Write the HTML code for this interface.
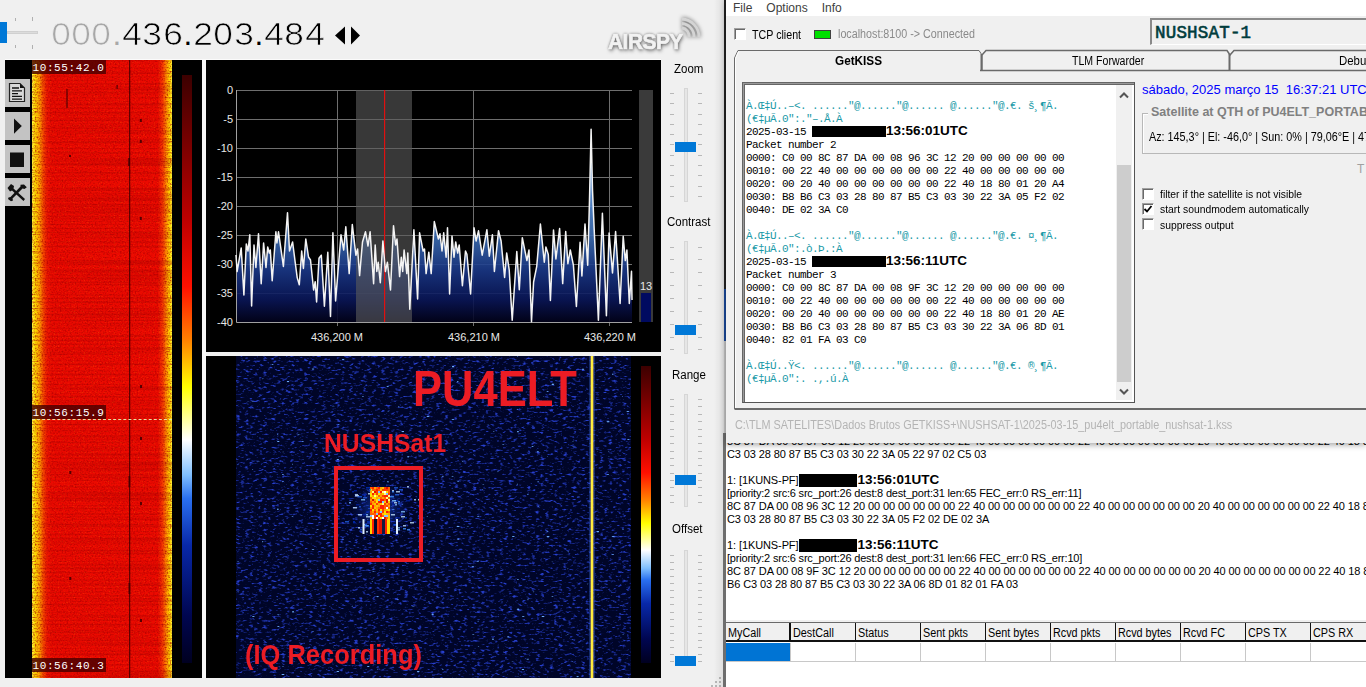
<!DOCTYPE html>
<html><head><meta charset="utf-8">
<style>
*{margin:0;padding:0;box-sizing:border-box}
html,body{width:1366px;height:687px;overflow:hidden;background:#f0f0f0;font-family:"Liberation Sans",sans-serif}
.a{position:absolute}
.mono{font-family:"Liberation Mono",monospace}
#term>div,#kiss>div{height:13px}
</style></head><body>
<!-- LEFT APP -->
<div class="a" style="left:0;top:0;width:724px;height:687px;background:#f0f0f0"></div>
<!-- top slider -->
<div class="a" style="left:7px;top:31px;width:31px;height:3px;background:#dcdcdc;border:1px solid #d0d0d0"></div>
<div class="a" style="left:0;top:22px;width:7px;height:21px;background:#0078d7"></div>
<div class="a" style="left:15px;top:18px;width:1px;height:3px;background:#b0b0b0"></div>
<div class="a" style="left:32px;top:17px;width:1px;height:4px;background:#b0b0b0"></div>
<div class="a" style="left:15px;top:45px;width:1px;height:3px;background:#b0b0b0"></div>
<div class="a" style="left:32px;top:45px;width:1px;height:4px;background:#b0b0b0"></div>
<!-- frequency -->
<div class="a" id="freq" style="left:50.85px;top:14px;font-size:31.5px;line-height:40px;white-space:nowrap;color:#000;-webkit-text-stroke:0.7px #f0f0f0"><span style="display:inline-block;width:20.3px;text-align:center;color:#a8a8a8;transform:scaleX(1.12)">0</span><span style="display:inline-block;width:20.3px;text-align:center;color:#a8a8a8;transform:scaleX(1.12)">0</span><span style="display:inline-block;width:20.3px;text-align:center;color:#a8a8a8;transform:scaleX(1.12)">0</span><span style="display:inline-block;width:10.2px;text-align:center;color:#a8a8a8;-webkit-text-stroke:0">.</span><span style="display:inline-block;width:20.3px;text-align:center;color:#000;transform:scaleX(1.12)">4</span><span style="display:inline-block;width:20.3px;text-align:center;color:#000;transform:scaleX(1.12)">3</span><span style="display:inline-block;width:20.3px;text-align:center;color:#000;transform:scaleX(1.12)">6</span><span style="display:inline-block;width:10.2px;text-align:center;color:#000;-webkit-text-stroke:0">.</span><span style="display:inline-block;width:20.3px;text-align:center;color:#000;transform:scaleX(1.12)">2</span><span style="display:inline-block;width:20.3px;text-align:center;color:#000;transform:scaleX(1.12)">0</span><span style="display:inline-block;width:20.3px;text-align:center;color:#000;transform:scaleX(1.12)">3</span><span style="display:inline-block;width:10.2px;text-align:center;color:#000;-webkit-text-stroke:0">.</span><span style="display:inline-block;width:20.3px;text-align:center;color:#000;transform:scaleX(1.12)">4</span><span style="display:inline-block;width:20.3px;text-align:center;color:#000;transform:scaleX(1.12)">8</span><span style="display:inline-block;width:20.3px;text-align:center;color:#000;transform:scaleX(1.12)">4</span></div>
<svg class="a" style="left:334px;top:26px" width="28" height="20"><path d="M1,9.5 L11,0.5 L11,18.5 Z" fill="#000"/><path d="M17,0.5 L26,9.5 L17,18.5 Z" fill="#000"/></svg>
<!-- AIRSPY logo -->
<div class="a" style="left:608px;top:30px;font-family:'Liberation Sans',sans-serif;font-weight:bold;font-size:21.5px;line-height:24px;color:#f2f2f2;letter-spacing:-0.5px;-webkit-text-stroke:0.7px #f2f2f2;text-shadow:0 0 3px rgba(0,0,0,0.6),1px 2px 4px rgba(0,0,0,0.5);transform-origin:0 0;transform:scaleX(0.97)">AIRSPY</div>
<svg class="a" style="left:672px;top:12px" width="36" height="34"><g fill="none" stroke="#d4d4d4" stroke-width="2.8" style="filter:drop-shadow(0 0 2px rgba(0,0,0,0.6))"><path d="M10,16 A8,8 0 0 1 17,25"/><path d="M10,11.5 A13,13 0 0 1 22,25"/><path d="M10,7 A18,18 0 0 1 27,25"/></g></svg>
<!-- left black panel -->
<div class="a" style="left:5px;top:60px;width:197px;height:618px;background:#000"></div>
<div class="a" style="left:5px;top:59px;width:656px;height:1px;background:#fbfbfb"></div>
<div class="a" style="left:202px;top:60px;width:4px;height:618px;background:#f7f7f7"></div>
<!-- buttons -->
<div class="a" style="left:5px;top:79px;width:25px;height:28px;background:#c3c3c3"></div>
<div class="a" style="left:5px;top:112px;width:25px;height:28px;background:#c3c3c3"></div>
<div class="a" style="left:5px;top:145px;width:25px;height:28px;background:#c3c3c3"></div>
<div class="a" style="left:5px;top:178px;width:25px;height:28px;background:#c3c3c3"></div>
<svg class="a" style="left:0;top:0" width="32" height="210">
 <path d="M9.5,83.5 H20 L24.5,88 V101.5 H9.5 Z" fill="#d8d8d8" stroke="#222" stroke-width="1.2"/>
 <path d="M20,83.5 L24.5,88 H20 Z" fill="#111"/>
 <g stroke="#111" stroke-width="1.3"><path d="M12,88 H19 M12,90.8 H22 M12,93.6 H18 M12,96.4 H22 M12,99.2 H22"/></g>
 <path d="M14,118.5 L21.8,126 L14,133.8 Z" fill="#111"/>
 <rect x="10" y="152.5" width="14" height="14.5" fill="#111"/>
 <path d="M7.5,188 L11,184 L14,186 L13.5,188.5 L25,199 L23.5,201 L12,190.5 L10,191.5 Z" fill="#111"/>
 <path d="M24,184.5 L26.8,187.2 L24.5,189 L22.5,188.5 L12.5,198.5 L13,200.5 L11,201.2 L8,199 L8.5,197.5 L10.5,197 L20.5,186.5 L20.5,184.7 Z" fill="#111"/>
</svg>
<!-- waterfall red -->
<div class="a" id="wf1" style="left:32px;top:60px;width:140px;height:618px;overflow:hidden;background:linear-gradient(90deg,#ffff40 0px,#ffe400 3px,#ffb000 7px,#f85000 11px,#f01800 15px,#ec0a00 20px,#ec0a00 126px,#f84000 131px,#ffa000 135px,#ffe000 138px,#ffff40 140px)">
 <svg width="140" height="618" style="position:absolute;left:0;top:0">
  <filter id="n1" x="0" y="0" width="100%" height="100%"><feTurbulence type="fractalNoise" baseFrequency="0.6 0.7" numOctaves="1" seed="3"/><feColorMatrix type="matrix" values="0 0 0 0 0.4  0 0 0 0 0  0 0 0 0 0  0 0 0 -3 1.6"/></filter>
  <filter id="n1b" x="0" y="0" width="100%" height="100%"><feTurbulence type="fractalNoise" baseFrequency="0.8 0.8" numOctaves="1" seed="9"/><feColorMatrix type="matrix" values="0 0 0 0 1  0 0 0 0 0.35  0 0 0 0 0  0 0 0 3 -1.75"/></filter>
  <filter id="n2" x="0" y="0" width="100%" height="100%"><feTurbulence type="fractalNoise" baseFrequency="0.003 0.5" numOctaves="1" seed="7"/><feColorMatrix type="matrix" values="0 0 0 0 0.3  0 0 0 0 0  0 0 0 0 0  0 0 0 -4 2.3"/></filter>
  <rect width="140" height="618" filter="url(#n1)" opacity="0.7"/>
  <rect width="140" height="618" filter="url(#n1b)" opacity="0.35"/>
  <rect width="140" height="618" filter="url(#n2)" opacity="0.25"/>
  <rect x="97.2" y="0" width="1" height="618" fill="#300000" opacity="0.9"/><rect x="34.4" y="29.0" width="1.2" height="19" fill="#400000" opacity="0.85"/><rect x="84.5" y="25.0" width="1.2" height="4" fill="#400000" opacity="0.85"/><rect x="107.8" y="59.0" width="2" height="3" fill="#400000" opacity="0.85"/><rect x="107.8" y="80.0" width="2" height="3" fill="#400000" opacity="0.85"/><rect x="37.0" y="95.0" width="2" height="2" fill="#400000" opacity="0.85"/><rect x="96.2" y="98.0" width="1.8" height="8" fill="#400000" opacity="0.85"/><rect x="107.8" y="157.0" width="2" height="3" fill="#400000" opacity="0.85"/><rect x="108.0" y="325.0" width="2" height="3" fill="#400000" opacity="0.85"/><rect x="108.0" y="377.0" width="2" height="3" fill="#400000" opacity="0.85"/><rect x="37.3" y="411.0" width="2" height="3" fill="#400000" opacity="0.85"/><rect x="96.5" y="416.0" width="1.8" height="11" fill="#400000" opacity="0.85"/><rect x="108.0" y="442.0" width="2" height="3" fill="#400000" opacity="0.85"/><rect x="37.3" y="517.0" width="2" height="3" fill="#400000" opacity="0.85"/><rect x="96.5" y="523.0" width="1.8" height="11" fill="#400000" opacity="0.85"/><rect x="108.0" y="559.0" width="2" height="3" fill="#400000" opacity="0.85"/>
 </svg>
</div>
<div class="a mono" style="left:32px;top:60px;width:74px;height:14px;background:rgba(70,0,0,0.8);color:#fff;font-size:11px;line-height:16px;letter-spacing:0.6px;padding-left:0.5px">10:55:42.0</div>
<div class="a" style="left:32px;top:419px;width:140px;height:1px;border-top:1px dashed #e8e0a0"></div>
<div class="a mono" style="left:32px;top:405px;width:74px;height:14px;background:rgba(70,0,0,0.8);color:#fff;font-size:11px;line-height:16px;letter-spacing:0.6px;padding-left:0.5px">10:56:15.9</div>
<div class="a mono" style="left:32px;top:658px;width:74px;height:14px;background:rgba(70,0,0,0.8);color:#fff;font-size:11px;line-height:16px;letter-spacing:0.6px;padding-left:0.5px">10:56:40.3</div>
<!-- colorbar 1 -->
<div class="a" style="left:182px;top:75px;width:10px;height:588px;background:linear-gradient(180deg,#3c0000 0%,#7a0000 12%,#c00000 25%,#ff1000 36%,#ff8000 45%,#ffff00 53%,#ffffff 62%,#80c0ff 68%,#2a70f0 72%,#0828a8 80%,#000650 92%,#000020 100%)"></div>

<!-- spectrum panel -->
<div class="a" style="left:206px;top:60px;width:455px;height:292px;background:#000"></div>
<svg class="a" style="left:0;top:0" width="700" height="360">
 <defs><linearGradient id="sg" gradientUnits="userSpaceOnUse" x1="0" y1="130" x2="0" y2="322"><stop offset="0" stop-color="#7ab8f0"/><stop offset="0.36" stop-color="#5a90d8"/><stop offset="0.57" stop-color="#3a6ab0"/><stop offset="0.73" stop-color="#1a3888"/><stop offset="0.885" stop-color="#0a1658"/><stop offset="1" stop-color="#02021a"/></linearGradient></defs>
 
 
 <g stroke="#6e6e6e" stroke-width="1">
  <path d="M236.5,90.5 H632 M236.5,119.5 H632 M236.5,148.5 H632 M236.5,177.5 H632 M236.5,206.5 H632 M236.5,235.5 H632 M236.5,264.5 H632 M236.5,293.5 H632"/>
  <path d="M337.5,90 V326 M473.5,90 V326 M609.5,90 V326"/>
 </g>
 <path d="M236,255 L237.1,271.5 L241.2,248.0 L243.9,295.0 L246.3,244.0 L248.0,251.0 L249.8,234.8 L251.6,306.0 L254.0,245.0 L255.9,267.4 L258.5,233.8 L261.2,283.7 L263.6,243.0 L266.0,267.4 L267.7,247.0 L269.3,253.0 L270.3,250.0 L272.2,280.7 L275.9,231.8 L276.9,243.0 L278.5,231.8 L283.4,266.4 L287.5,212.8 L289.5,251.0 L292.6,242.0 L295.2,262.3 L297.2,277.6 L299.3,284.8 L301.7,251.0 L303.4,268.5 L305.8,239.0 L308.5,257.0 L310.5,260.0 L313.6,290.0 L315.2,281.7 L316.6,302.0 L319.0,258.3 L321.3,255.2 L324.4,306.2 L327.8,252.2 L330.5,316.4 L332.9,232.8 L335.6,301.0 L338.0,271.5 L341.0,234.8 L343.7,250.0 L345.8,226.7 L349.2,273.6 L352.3,224.6 L355.9,255.2 L357.6,249.0 L359.6,275.6 L362.5,242.0 L365.5,231.8 L368.0,246.0 L370.1,231.8 L373.6,283.7 L375.2,245.0 L376.8,271.5 L378.2,262.3 L380.3,282.7 L382.9,241.0 L385.4,271.5 L387.4,262.3 L390.5,290.0 L393.5,225.7 L395.6,245.0 L397.0,239.0 L399.6,276.6 L401.3,257.2 L402.7,271.5 L404.1,250.0 L406.8,273.6 L407.8,253.0 L409.8,309.2 L413.9,229.7 L417.6,299.0 L419.6,232.8 L423.1,251.0 L424.5,249.0 L426.1,273.6 L428.8,252.2 L431.2,273.6 L434.3,221.6 L438.4,239.0 L440.0,233.8 L442.0,251.0 L443.7,232.8 L446.1,257.2 L447.5,227.7 L449.6,294.0 L452.0,236.0 L454.0,257.2 L455.7,242.0 L457.7,253.0 L459.2,245.0 L462.4,285.8 L465.5,251.0 L466.9,254.2 L470.6,294.0 L474.0,227.7 L476.1,241.0 L478.5,230.8 L482.2,255.2 L486.9,229.7 L489.3,256.2 L492.4,234.8 L494.4,271.5 L498.5,230.8 L501.1,241.0 L504.6,277.4 L506.7,253.0 L509.2,269.8 L512.2,320.2 L516.8,251.5 L519.3,289.7 L522.3,237.7 L526.9,260.6 L529.0,250.0 L531.5,321.8 L533.6,282.0 L536.7,266.7 L540.4,224.0 L544.3,262.2 L545.9,246.9 L548.3,254.5 L550.4,300.4 L553.5,230.0 L555.9,259.0 L559.6,228.5 L562.7,283.6 L565.7,231.6 L567.9,263.7 L570.3,250.0 L573.4,265.2 L576.4,306.5 L580.1,242.3 L581.9,275.9 L585.0,224.0 L587.7,265.2 L589.5,200.0 L591.1,129.2 L592.5,190.0 L594.2,230.0 L598.4,320.2 L602.4,213.2 L606.4,315.7 L609.1,233.1 L612.5,272.9 L615.6,231.6 L620.1,303.4 L623.2,236.2 L625.3,260.6 L626.9,250.0 L629.3,303.4 L631.5,271.3 L632,300 L632,322 L236,322 Z" fill="url(#sg)" fill-opacity="0.9"/>
 <rect x="356" y="90" width="56" height="232" fill="#5a5a5a" opacity="0.62"/>
 <path d="M236.5,90 V322.5 H632" fill="none" stroke="#a0a0a0" stroke-width="1"/>
 <rect x="384" y="90" width="1.2" height="232" fill="#e01010"/>
 <path d="M236,255 L237.1,271.5 L241.2,248.0 L243.9,295.0 L246.3,244.0 L248.0,251.0 L249.8,234.8 L251.6,306.0 L254.0,245.0 L255.9,267.4 L258.5,233.8 L261.2,283.7 L263.6,243.0 L266.0,267.4 L267.7,247.0 L269.3,253.0 L270.3,250.0 L272.2,280.7 L275.9,231.8 L276.9,243.0 L278.5,231.8 L283.4,266.4 L287.5,212.8 L289.5,251.0 L292.6,242.0 L295.2,262.3 L297.2,277.6 L299.3,284.8 L301.7,251.0 L303.4,268.5 L305.8,239.0 L308.5,257.0 L310.5,260.0 L313.6,290.0 L315.2,281.7 L316.6,302.0 L319.0,258.3 L321.3,255.2 L324.4,306.2 L327.8,252.2 L330.5,316.4 L332.9,232.8 L335.6,301.0 L338.0,271.5 L341.0,234.8 L343.7,250.0 L345.8,226.7 L349.2,273.6 L352.3,224.6 L355.9,255.2 L357.6,249.0 L359.6,275.6 L362.5,242.0 L365.5,231.8 L368.0,246.0 L370.1,231.8 L373.6,283.7 L375.2,245.0 L376.8,271.5 L378.2,262.3 L380.3,282.7 L382.9,241.0 L385.4,271.5 L387.4,262.3 L390.5,290.0 L393.5,225.7 L395.6,245.0 L397.0,239.0 L399.6,276.6 L401.3,257.2 L402.7,271.5 L404.1,250.0 L406.8,273.6 L407.8,253.0 L409.8,309.2 L413.9,229.7 L417.6,299.0 L419.6,232.8 L423.1,251.0 L424.5,249.0 L426.1,273.6 L428.8,252.2 L431.2,273.6 L434.3,221.6 L438.4,239.0 L440.0,233.8 L442.0,251.0 L443.7,232.8 L446.1,257.2 L447.5,227.7 L449.6,294.0 L452.0,236.0 L454.0,257.2 L455.7,242.0 L457.7,253.0 L459.2,245.0 L462.4,285.8 L465.5,251.0 L466.9,254.2 L470.6,294.0 L474.0,227.7 L476.1,241.0 L478.5,230.8 L482.2,255.2 L486.9,229.7 L489.3,256.2 L492.4,234.8 L494.4,271.5 L498.5,230.8 L501.1,241.0 L504.6,277.4 L506.7,253.0 L509.2,269.8 L512.2,320.2 L516.8,251.5 L519.3,289.7 L522.3,237.7 L526.9,260.6 L529.0,250.0 L531.5,321.8 L533.6,282.0 L536.7,266.7 L540.4,224.0 L544.3,262.2 L545.9,246.9 L548.3,254.5 L550.4,300.4 L553.5,230.0 L555.9,259.0 L559.6,228.5 L562.7,283.6 L565.7,231.6 L567.9,263.7 L570.3,250.0 L573.4,265.2 L576.4,306.5 L580.1,242.3 L581.9,275.9 L585.0,224.0 L587.7,265.2 L589.5,200.0 L591.1,129.2 L592.5,190.0 L594.2,230.0 L598.4,320.2 L602.4,213.2 L606.4,315.7 L609.1,233.1 L612.5,272.9 L615.6,231.6 L620.1,303.4 L623.2,236.2 L625.3,260.6 L626.9,250.0 L629.3,303.4 L631.5,271.3 L632,300" fill="none" stroke="#f4f4f4" stroke-width="1.5" stroke-linejoin="round"/>
 <g font-family="Liberation Sans" font-size="11" fill="#e8e8e8" text-anchor="end">
  <text x="233" y="94">0</text><text x="233" y="123">-5</text><text x="233" y="152">-10</text><text x="233" y="181">-15</text><text x="233" y="210">-20</text><text x="233" y="239">-25</text><text x="233" y="268">-30</text><text x="233" y="297">-35</text><text x="233" y="326">-40</text>
 </g>
 <g font-family="Liberation Sans" font-size="11" fill="#e8e8e8" text-anchor="middle">
  <text x="337" y="341">436,200 M</text><text x="474" y="341">436,210 M</text><text x="610" y="341">436,220 M</text>
 </g>
 <rect x="639" y="90" width="14" height="232" fill="#3a3a3a"/>
 <rect x="641" y="293" width="10" height="29" fill="#000a60"/>
 <text x="640" y="290" font-family="Liberation Sans" font-size="11" fill="#e8e8e8">13</text>
</svg>

<!-- lower waterfall -->
<div class="a" style="left:206px;top:356px;width:455px;height:322px;background:#000"></div>
<div class="a" id="wf2" style="left:236px;top:356px;width:395px;height:322px;overflow:hidden;background:#000528">
 <svg width="395" height="322" style="position:absolute;left:0;top:0">
  <filter id="n3" x="0" y="0" width="100%" height="100%"><feTurbulence type="fractalNoise" baseFrequency="0.22 0.45" numOctaves="2" seed="11"/><feColorMatrix type="matrix" values="0 0 0 0 0.02  0 0 0 0 0.05  0 0 0 0 0.62  0 0 0 4 -2.2"/></filter>
  <filter id="n4" x="0" y="0" width="100%" height="100%"><feTurbulence type="fractalNoise" baseFrequency="0.2 0.4" numOctaves="1" seed="5"/><feColorMatrix type="matrix" values="0 0 0 0 0.15  0 0 0 0 0.42  0 0 0 0 1  0 0 0 12 -8.9"/></filter>
  <rect width="395" height="322" filter="url(#n3)"/>
  <rect width="395" height="322" filter="url(#n4)"/>
  <rect x="354.5" y="0" width="3" height="322" fill="#ffb000"/>
  <rect x="355.2" y="0" width="1.5" height="322" fill="#ffff50"/>
  <rect x="353.5" y="0" width="1" height="322" fill="#4080ff" opacity="0.6"/>
  <rect x="357.5" y="0" width="1" height="322" fill="#4080ff" opacity="0.6"/>
 </svg>
</div>
<!-- signal blob -->
<div class="a" style="left:352px;top:482px;width:56px;height:56px;background:radial-gradient(ellipse 50% 50% at 50% 50%,rgba(40,110,255,0.55),rgba(20,60,200,0.25) 60%,rgba(0,0,0,0) 100%)"></div>
<svg class="a" style="left:0;top:0" width="700" height="687"><rect x="370" y="487" width="2" height="2" fill="#ff6000"/><rect x="372" y="487" width="2" height="2" fill="#ff2000"/><rect x="374" y="487" width="2" height="2" fill="#ffa000"/><rect x="376" y="487" width="2" height="2" fill="#ff6000"/><rect x="378" y="487" width="2" height="2" fill="#ff2000"/><rect x="380" y="487" width="2" height="2" fill="#ffa000"/><rect x="382" y="487" width="2" height="2" fill="#ffc000"/><rect x="384" y="487" width="2" height="2" fill="#ff4000"/><rect x="386" y="487" width="2" height="2" fill="#e01000"/><rect x="388" y="487" width="2" height="2" fill="#ff6000"/><rect x="370" y="489" width="2" height="2" fill="#ffe000"/><rect x="372" y="489" width="2" height="2" fill="#ff6000"/><rect x="374" y="489" width="2" height="2" fill="#ff6000"/><rect x="376" y="489" width="2" height="2" fill="#ff2000"/><rect x="378" y="489" width="2" height="2" fill="#ff6000"/><rect x="380" y="489" width="2" height="2" fill="#ffc000"/><rect x="382" y="489" width="2" height="2" fill="#ff4000"/><rect x="384" y="489" width="2" height="2" fill="#ff4000"/><rect x="386" y="489" width="2" height="2" fill="#ff4000"/><rect x="388" y="489" width="2" height="2" fill="#ff6000"/><rect x="370" y="491" width="2" height="2" fill="#ffa000"/><rect x="372" y="491" width="2" height="2" fill="#ffff80"/><rect x="374" y="491" width="2" height="2" fill="#e01000"/><rect x="376" y="491" width="2" height="2" fill="#ff4000"/><rect x="378" y="491" width="2" height="2" fill="#80c0ff"/><rect x="380" y="491" width="2" height="2" fill="#ff2000"/><rect x="382" y="491" width="2" height="2" fill="#ffff80"/><rect x="384" y="491" width="2" height="2" fill="#ffffff"/><rect x="386" y="491" width="2" height="2" fill="#ffe000"/><rect x="388" y="491" width="2" height="2" fill="#ff6000"/><rect x="370" y="493" width="2" height="2" fill="#ffe000"/><rect x="372" y="493" width="2" height="2" fill="#ff2000"/><rect x="374" y="493" width="2" height="2" fill="#ffc000"/><rect x="376" y="493" width="2" height="2" fill="#ff4000"/><rect x="378" y="493" width="2" height="2" fill="#ffe000"/><rect x="380" y="493" width="2" height="2" fill="#ffa000"/><rect x="382" y="493" width="2" height="2" fill="#ffc000"/><rect x="384" y="493" width="2" height="2" fill="#ffff80"/><rect x="386" y="493" width="2" height="2" fill="#80c0ff"/><rect x="388" y="493" width="2" height="2" fill="#ff4000"/><rect x="370" y="495" width="2" height="2" fill="#ffe000"/><rect x="372" y="495" width="2" height="2" fill="#ffa000"/><rect x="374" y="495" width="2" height="2" fill="#ffff80"/><rect x="376" y="495" width="2" height="2" fill="#ffe000"/><rect x="378" y="495" width="2" height="2" fill="#ff6000"/><rect x="380" y="495" width="2" height="2" fill="#ffa000"/><rect x="382" y="495" width="2" height="2" fill="#ff4000"/><rect x="384" y="495" width="2" height="2" fill="#ff2000"/><rect x="386" y="495" width="2" height="2" fill="#ff2000"/><rect x="388" y="495" width="2" height="2" fill="#ffff80"/><rect x="370" y="497" width="2" height="2" fill="#ff6000"/><rect x="372" y="497" width="2" height="2" fill="#ffe000"/><rect x="374" y="497" width="2" height="2" fill="#ffe000"/><rect x="376" y="497" width="2" height="2" fill="#ffa000"/><rect x="378" y="497" width="2" height="2" fill="#ffc000"/><rect x="380" y="497" width="2" height="2" fill="#ff6000"/><rect x="382" y="497" width="2" height="2" fill="#ffa000"/><rect x="384" y="497" width="2" height="2" fill="#ff6000"/><rect x="386" y="497" width="2" height="2" fill="#ffff80"/><rect x="388" y="497" width="2" height="2" fill="#ff6000"/><rect x="370" y="499" width="2" height="2" fill="#ffa000"/><rect x="372" y="499" width="2" height="2" fill="#e01000"/><rect x="374" y="499" width="2" height="2" fill="#ffa000"/><rect x="376" y="499" width="2" height="2" fill="#ffe000"/><rect x="378" y="499" width="2" height="2" fill="#80c0ff"/><rect x="380" y="499" width="2" height="2" fill="#ff2000"/><rect x="382" y="499" width="2" height="2" fill="#ff2000"/><rect x="384" y="499" width="2" height="2" fill="#ff6000"/><rect x="386" y="499" width="2" height="2" fill="#e01000"/><rect x="388" y="499" width="2" height="2" fill="#ffff80"/><rect x="370" y="501" width="2" height="2" fill="#ff6000"/><rect x="372" y="501" width="2" height="2" fill="#ffa000"/><rect x="374" y="501" width="2" height="2" fill="#ff6000"/><rect x="376" y="501" width="2" height="2" fill="#ffe000"/><rect x="378" y="501" width="2" height="2" fill="#ff2000"/><rect x="380" y="501" width="2" height="2" fill="#e01000"/><rect x="382" y="501" width="2" height="2" fill="#80c0ff"/><rect x="384" y="501" width="2" height="2" fill="#ffc000"/><rect x="386" y="501" width="2" height="2" fill="#e01000"/><rect x="388" y="501" width="2" height="2" fill="#ffc000"/><rect x="370" y="503" width="2" height="2" fill="#ff2000"/><rect x="372" y="503" width="2" height="2" fill="#ffa000"/><rect x="374" y="503" width="2" height="2" fill="#ffc000"/><rect x="376" y="503" width="2" height="2" fill="#ff4000"/><rect x="378" y="503" width="2" height="2" fill="#ffa000"/><rect x="380" y="503" width="2" height="2" fill="#ffc000"/><rect x="382" y="503" width="2" height="2" fill="#ffff80"/><rect x="384" y="503" width="2" height="2" fill="#ff4000"/><rect x="386" y="503" width="2" height="2" fill="#ffa000"/><rect x="388" y="503" width="2" height="2" fill="#ff6000"/><rect x="370" y="505" width="2" height="2" fill="#ffe000"/><rect x="372" y="505" width="2" height="2" fill="#ff2000"/><rect x="374" y="505" width="2" height="2" fill="#ffa000"/><rect x="376" y="505" width="2" height="2" fill="#ffc000"/><rect x="378" y="505" width="2" height="2" fill="#ffa000"/><rect x="380" y="505" width="2" height="2" fill="#ff2000"/><rect x="382" y="505" width="2" height="2" fill="#ff2000"/><rect x="384" y="505" width="2" height="2" fill="#ff6000"/><rect x="386" y="505" width="2" height="2" fill="#ff4000"/><rect x="388" y="505" width="2" height="2" fill="#ffa000"/><rect x="370" y="507" width="2" height="2" fill="#ffa000"/><rect x="372" y="507" width="2" height="2" fill="#ff2000"/><rect x="374" y="507" width="2" height="2" fill="#ffc000"/><rect x="376" y="507" width="2" height="2" fill="#ffa000"/><rect x="378" y="507" width="2" height="2" fill="#ff6000"/><rect x="380" y="507" width="2" height="2" fill="#ff2000"/><rect x="382" y="507" width="2" height="2" fill="#ff2000"/><rect x="384" y="507" width="2" height="2" fill="#ff6000"/><rect x="386" y="507" width="2" height="2" fill="#ffffff"/><rect x="388" y="507" width="2" height="2" fill="#ff6000"/><rect x="370" y="509" width="2" height="2" fill="#ff2000"/><rect x="372" y="509" width="2" height="2" fill="#ffe000"/><rect x="374" y="509" width="2" height="2" fill="#ff6000"/><rect x="376" y="509" width="2" height="2" fill="#ffc000"/><rect x="378" y="509" width="2" height="2" fill="#ff2000"/><rect x="380" y="509" width="2" height="2" fill="#ffe000"/><rect x="382" y="509" width="2" height="2" fill="#ff4000"/><rect x="384" y="509" width="2" height="2" fill="#ffa000"/><rect x="386" y="509" width="2" height="2" fill="#ffc000"/><rect x="388" y="509" width="2" height="2" fill="#ffe000"/><rect x="370" y="511" width="2" height="2" fill="#ff6000"/><rect x="372" y="511" width="2" height="2" fill="#ffa000"/><rect x="374" y="511" width="2" height="2" fill="#ff2000"/><rect x="376" y="511" width="2" height="2" fill="#ffa000"/><rect x="378" y="511" width="2" height="2" fill="#ff6000"/><rect x="380" y="511" width="2" height="2" fill="#80c0ff"/><rect x="382" y="511" width="2" height="2" fill="#ff4000"/><rect x="384" y="511" width="2" height="2" fill="#ffe000"/><rect x="386" y="511" width="2" height="2" fill="#ff2000"/><rect x="388" y="511" width="2" height="2" fill="#ff6000"/><rect x="370" y="513" width="2" height="2" fill="#ff6000"/><rect x="372" y="513" width="2" height="2" fill="#ff6000"/><rect x="374" y="513" width="2" height="2" fill="#ff6000"/><rect x="376" y="513" width="2" height="2" fill="#80c0ff"/><rect x="378" y="513" width="2" height="2" fill="#ff2000"/><rect x="380" y="513" width="2" height="2" fill="#ff2000"/><rect x="382" y="513" width="2" height="2" fill="#ffc000"/><rect x="384" y="513" width="2" height="2" fill="#ffe000"/><rect x="386" y="513" width="2" height="2" fill="#ffc000"/><rect x="388" y="513" width="2" height="2" fill="#ffa000"/><rect x="370" y="515" width="2" height="2" fill="#80c0ff"/><rect x="372" y="515" width="2" height="2" fill="#ffffff"/><rect x="374" y="515" width="2" height="2" fill="#ff4000"/><rect x="376" y="515" width="2" height="2" fill="#e01000"/><rect x="378" y="515" width="2" height="2" fill="#ffe000"/><rect x="380" y="515" width="2" height="2" fill="#ff2000"/><rect x="382" y="515" width="2" height="2" fill="#ff6000"/><rect x="384" y="515" width="2" height="2" fill="#80c0ff"/><rect x="386" y="515" width="2" height="2" fill="#80c0ff"/><rect x="388" y="515" width="2" height="2" fill="#ffc000"/><rect x="370" y="517" width="2" height="2" fill="#ffa000"/><rect x="372" y="517" width="2" height="2" fill="#ffffff"/><rect x="374" y="517" width="2" height="2" fill="#ff4000"/><rect x="376" y="517" width="2" height="2" fill="#ffffff"/><rect x="378" y="517" width="2" height="2" fill="#ff4000"/><rect x="380" y="517" width="2" height="2" fill="#ffe000"/><rect x="382" y="517" width="2" height="2" fill="#ffffff"/><rect x="384" y="517" width="2" height="2" fill="#e01000"/><rect x="386" y="517" width="2" height="2" fill="#ff6000"/><rect x="388" y="517" width="2" height="2" fill="#ffc000"/><rect x="370" y="519" width="2" height="15" fill="#ffd000"/><rect x="372" y="519" width="2" height="15" fill="#ff2000"/><rect x="374" y="519" width="3" height="15" fill="#000830"/><rect x="377" y="519" width="2" height="15" fill="#ff3000"/><rect x="379" y="519" width="3" height="15" fill="#e01000"/><rect x="382" y="519" width="3" height="15" fill="#101840"/><rect x="385" y="519" width="2" height="15" fill="#ff2000"/><rect x="387" y="519" width="3" height="15" fill="#ffd800"/><rect x="399" y="489" width="4" height="1.5" fill="#2060e0" opacity="0.8"/><rect x="360" y="529" width="2" height="1.5" fill="#2060e0" opacity="0.8"/><rect x="395" y="504" width="2" height="1.5" fill="#80c0ff" opacity="0.8"/><rect x="355" y="495" width="4" height="1.5" fill="#c0e0ff" opacity="0.8"/><rect x="397" y="508" width="3" height="1.5" fill="#0020a0" opacity="0.8"/><rect x="366" y="487" width="4" height="1.5" fill="#0030c0" opacity="0.8"/><rect x="368" y="526" width="2" height="1.5" fill="#0020a0" opacity="0.8"/><rect x="403" y="528" width="3" height="1.5" fill="#4090ff" opacity="0.8"/><rect x="393" y="524" width="4" height="1.5" fill="#0030c0" opacity="0.8"/><rect x="354" y="490" width="3" height="1.5" fill="#0020a0" opacity="0.8"/><rect x="366" y="525" width="2" height="1.5" fill="#80c0ff" opacity="0.8"/><rect x="397" y="529" width="3" height="1.5" fill="#80c0ff" opacity="0.8"/><rect x="368" y="493" width="2" height="1.5" fill="#c0e0ff" opacity="0.8"/><rect x="396" y="491" width="4" height="1.5" fill="#c0e0ff" opacity="0.8"/><rect x="366" y="531" width="2" height="1.5" fill="#c0e0ff" opacity="0.8"/><rect x="397" y="517" width="3" height="1.5" fill="#0020a0" opacity="0.8"/><rect x="353" y="522" width="3" height="1.5" fill="#0020a0" opacity="0.8"/><rect x="366" y="514" width="2" height="1.5" fill="#80c0ff" opacity="0.8"/><rect x="349" y="502" width="2" height="1.5" fill="#80c0ff" opacity="0.8"/><rect x="358" y="514" width="4" height="1.5" fill="#c0e0ff" opacity="0.8"/><rect x="392" y="503" width="3" height="1.5" fill="#0020a0" opacity="0.8"/><rect x="405" y="517" width="2" height="1.5" fill="#0030c0" opacity="0.8"/><rect x="355" y="494" width="3" height="1.5" fill="#c0e0ff" opacity="0.8"/><rect x="398" y="501" width="2" height="1.5" fill="#4090ff" opacity="0.8"/><rect x="367" y="521" width="3" height="1.5" fill="#0030c0" opacity="0.8"/><rect x="353" y="521" width="2" height="1.5" fill="#0030c0" opacity="0.8"/><rect x="366" y="516" width="4" height="1.5" fill="#c0e0ff" opacity="0.8"/><rect x="403" y="525" width="3" height="1.5" fill="#c0e0ff" opacity="0.8"/><rect x="366" y="511" width="3" height="1.5" fill="#0020a0" opacity="0.8"/><rect x="396" y="527" width="4" height="1.5" fill="#80c0ff" opacity="0.8"/><rect x="361" y="499" width="4" height="1.5" fill="#80c0ff" opacity="0.8"/><rect x="394" y="487" width="4" height="1.5" fill="#2060e0" opacity="0.8"/><rect x="364" y="524" width="3" height="1.5" fill="#80c0ff" opacity="0.8"/><rect x="395" y="500" width="3" height="1.5" fill="#0030c0" opacity="0.8"/><rect x="369" y="489" width="2" height="1.5" fill="#2060e0" opacity="0.8"/><rect x="410" y="522" width="4" height="1.5" fill="#c0e0ff" opacity="0.8"/><rect x="349" y="498" width="2" height="1.5" fill="#0020a0" opacity="0.8"/><rect x="418" y="499" width="4" height="1.5" fill="#c0e0ff" opacity="0.8"/><rect x="395" y="494" width="4" height="1.5" fill="#2060e0" opacity="0.8"/><rect x="414" y="499" width="2" height="1.5" fill="#c0e0ff" opacity="0.8"/><rect x="394" y="500" width="2" height="1.5" fill="#2060e0" opacity="0.8"/><rect x="394" y="524" width="2" height="1.5" fill="#2060e0" opacity="0.8"/><rect x="401" y="511" width="4" height="1.5" fill="#80c0ff" opacity="0.8"/><rect x="353" y="507" width="4" height="1.5" fill="#c0e0ff" opacity="0.8"/><rect x="362" y="494" width="4" height="1.5" fill="#0020a0" opacity="0.8"/><rect x="394" y="502" width="3" height="1.5" fill="#c0e0ff" opacity="0.8"/><rect x="392" y="500" width="4" height="1.5" fill="#80c0ff" opacity="0.8"/><rect x="365" y="524" width="2" height="1.5" fill="#0030c0" opacity="0.8"/><rect x="401" y="516" width="2" height="1.5" fill="#c0e0ff" opacity="0.8"/><rect x="363" y="514" width="3" height="1.5" fill="#0020a0" opacity="0.8"/><rect x="392" y="490" width="2" height="1.5" fill="#c0e0ff" opacity="0.8"/><rect x="363" y="497" width="4" height="1.5" fill="#2060e0" opacity="0.8"/><rect x="352" y="491" width="2" height="1.5" fill="#0020a0" opacity="0.8"/><rect x="407" y="486" width="2" height="1.5" fill="#c0e0ff" opacity="0.8"/><rect x="358" y="496" width="4" height="1.5" fill="#2060e0" opacity="0.8"/><rect x="356" y="504" width="3" height="1.5" fill="#0020a0" opacity="0.8"/><rect x="393" y="531" width="4" height="1.5" fill="#0020a0" opacity="0.8"/><rect x="359" y="506" width="2" height="1.5" fill="#2060e0" opacity="0.8"/><rect x="407" y="529" width="3" height="1.5" fill="#4090ff" opacity="0.8"/><rect x="365" y="525" width="4" height="1.5" fill="#4090ff" opacity="0.8"/><rect x="390" y="496" width="4" height="1.5" fill="#4090ff" opacity="0.8"/><rect x="391" y="514" width="4" height="1.5" fill="#c0e0ff" opacity="0.8"/><rect x="392" y="491" width="2" height="1.5" fill="#4090ff" opacity="0.8"/><rect x="406" y="500" width="4" height="1.5" fill="#0020a0" opacity="0.8"/><rect x="403" y="516" width="2" height="1.5" fill="#c0e0ff" opacity="0.8"/><rect x="358" y="527" width="2" height="1.5" fill="#c0e0ff" opacity="0.8"/><rect x="345" y="521" width="4" height="1.5" fill="#2060e0" opacity="0.8"/><rect x="398" y="503" width="2" height="1.5" fill="#2060e0" opacity="0.8"/><rect x="362.5" y="519" width="2" height="15" fill="#e0f0ff"/><rect x="396" y="519" width="2" height="15" fill="#e0f0ff"/></svg>
<div class="a" style="left:334px;top:466px;width:89px;height:96px;border:4px solid #ec1c24"></div>
<div class="a" style="left:413px;top:362px;font-weight:bold;font-size:49.5px;line-height:54px;color:#ec1c24;transform-origin:0 0;transform:scaleX(0.88)">PU4ELT</div>
<div class="a" style="left:324px;top:428px;font-weight:bold;font-size:25.5px;line-height:30px;color:#ec1c24;transform-origin:0 0;transform:scaleX(0.97)">NUSHSat1</div>
<div class="a" style="left:245px;top:639px;font-weight:bold;font-size:28px;line-height:32px;color:#ec1c24;transform-origin:0 0;transform:scaleX(0.91)">(IQ Recording)</div>
<!-- colorbar 2 -->
<div class="a" style="left:641px;top:366px;width:10px;height:297px;background:linear-gradient(180deg,#3c0000 0%,#7a0000 12%,#c00000 25%,#ff1000 36%,#ff8000 45%,#ffff00 53%,#ffffff 62%,#80c0ff 68%,#2a70f0 72%,#0828a8 80%,#000650 92%,#000020 100%)"></div>

<!-- slider column -->
<div class="a" style="left:719px;top:677px;width:2px;height:2px;background:#b8b8b8"></div><div class="a" style="left:719px;top:681px;width:2px;height:2px;background:#b8b8b8"></div><div class="a" style="left:715px;top:681px;width:2px;height:2px;background:#b8b8b8"></div><div class="a" style="left:719px;top:685px;width:2px;height:2px;background:#b8b8b8"></div><div class="a" style="left:715px;top:685px;width:2px;height:2px;background:#b8b8b8"></div><div class="a" style="left:711px;top:685px;width:2px;height:2px;background:#b8b8b8"></div>
<div class="a" style="left:673.5px;top:62.0px;font-size:12.5px;line-height:15px;color:#000;white-space:nowrap;transform-origin:0 0;transform:scaleX(0.92)">Zoom</div>
<div class="a" style="left:684px;top:88px;width:4px;height:114px;background:#e6e6e6;border:1px solid #d6d6d6"></div>
<div class="a" style="left:670px;top:93px;width:4px;height:1px;background:#b8b8b8"></div><div class="a" style="left:698px;top:93px;width:4px;height:1px;background:#b8b8b8"></div>
<div class="a" style="left:670px;top:103px;width:4px;height:1px;background:#b8b8b8"></div><div class="a" style="left:698px;top:103px;width:4px;height:1px;background:#b8b8b8"></div>
<div class="a" style="left:670px;top:114px;width:4px;height:1px;background:#b8b8b8"></div><div class="a" style="left:698px;top:114px;width:4px;height:1px;background:#b8b8b8"></div>
<div class="a" style="left:670px;top:124px;width:4px;height:1px;background:#b8b8b8"></div><div class="a" style="left:698px;top:124px;width:4px;height:1px;background:#b8b8b8"></div>
<div class="a" style="left:670px;top:134px;width:4px;height:1px;background:#b8b8b8"></div><div class="a" style="left:698px;top:134px;width:4px;height:1px;background:#b8b8b8"></div>
<div class="a" style="left:670px;top:144px;width:4px;height:1px;background:#b8b8b8"></div><div class="a" style="left:698px;top:144px;width:4px;height:1px;background:#b8b8b8"></div>
<div class="a" style="left:670px;top:155px;width:4px;height:1px;background:#b8b8b8"></div><div class="a" style="left:698px;top:155px;width:4px;height:1px;background:#b8b8b8"></div>
<div class="a" style="left:670px;top:165px;width:4px;height:1px;background:#b8b8b8"></div><div class="a" style="left:698px;top:165px;width:4px;height:1px;background:#b8b8b8"></div>
<div class="a" style="left:670px;top:175px;width:4px;height:1px;background:#b8b8b8"></div><div class="a" style="left:698px;top:175px;width:4px;height:1px;background:#b8b8b8"></div>
<div class="a" style="left:670px;top:186px;width:4px;height:1px;background:#b8b8b8"></div><div class="a" style="left:698px;top:186px;width:4px;height:1px;background:#b8b8b8"></div>
<div class="a" style="left:670px;top:196px;width:4px;height:1px;background:#b8b8b8"></div><div class="a" style="left:698px;top:196px;width:4px;height:1px;background:#b8b8b8"></div>
<div class="a" style="left:675px;top:142px;width:21px;height:10px;background:#0078d7"></div>
<div class="a" style="left:666.5px;top:215.0px;font-size:12.5px;line-height:15px;color:#000;white-space:nowrap;transform-origin:0 0;transform:scaleX(0.92)">Contrast</div>
<div class="a" style="left:684px;top:241px;width:4px;height:113px;background:#e6e6e6;border:1px solid #d6d6d6"></div>
<div class="a" style="left:670px;top:247px;width:4px;height:1px;background:#b8b8b8"></div><div class="a" style="left:698px;top:247px;width:4px;height:1px;background:#b8b8b8"></div>
<div class="a" style="left:670px;top:259px;width:4px;height:1px;background:#b8b8b8"></div><div class="a" style="left:698px;top:259px;width:4px;height:1px;background:#b8b8b8"></div>
<div class="a" style="left:670px;top:272px;width:4px;height:1px;background:#b8b8b8"></div><div class="a" style="left:698px;top:272px;width:4px;height:1px;background:#b8b8b8"></div>
<div class="a" style="left:670px;top:285px;width:4px;height:1px;background:#b8b8b8"></div><div class="a" style="left:698px;top:285px;width:4px;height:1px;background:#b8b8b8"></div>
<div class="a" style="left:670px;top:298px;width:4px;height:1px;background:#b8b8b8"></div><div class="a" style="left:698px;top:298px;width:4px;height:1px;background:#b8b8b8"></div>
<div class="a" style="left:670px;top:311px;width:4px;height:1px;background:#b8b8b8"></div><div class="a" style="left:698px;top:311px;width:4px;height:1px;background:#b8b8b8"></div>
<div class="a" style="left:670px;top:324px;width:4px;height:1px;background:#b8b8b8"></div><div class="a" style="left:698px;top:324px;width:4px;height:1px;background:#b8b8b8"></div>
<div class="a" style="left:670px;top:337px;width:4px;height:1px;background:#b8b8b8"></div><div class="a" style="left:698px;top:337px;width:4px;height:1px;background:#b8b8b8"></div>
<div class="a" style="left:670px;top:349px;width:4px;height:1px;background:#b8b8b8"></div><div class="a" style="left:698px;top:349px;width:4px;height:1px;background:#b8b8b8"></div>
<div class="a" style="left:675px;top:325px;width:21px;height:10px;background:#0078d7"></div>
<div class="a" style="left:671.5px;top:368.0px;font-size:12.5px;line-height:15px;color:#000;white-space:nowrap;transform-origin:0 0;transform:scaleX(0.92)">Range</div>
<div class="a" style="left:684px;top:394px;width:4px;height:113px;background:#e6e6e6;border:1px solid #d6d6d6"></div>
<div class="a" style="left:670px;top:399px;width:4px;height:1px;background:#b8b8b8"></div><div class="a" style="left:698px;top:399px;width:4px;height:1px;background:#b8b8b8"></div>
<div class="a" style="left:670px;top:406px;width:4px;height:1px;background:#b8b8b8"></div><div class="a" style="left:698px;top:406px;width:4px;height:1px;background:#b8b8b8"></div>
<div class="a" style="left:670px;top:414px;width:4px;height:1px;background:#b8b8b8"></div><div class="a" style="left:698px;top:414px;width:4px;height:1px;background:#b8b8b8"></div>
<div class="a" style="left:670px;top:421px;width:4px;height:1px;background:#b8b8b8"></div><div class="a" style="left:698px;top:421px;width:4px;height:1px;background:#b8b8b8"></div>
<div class="a" style="left:670px;top:429px;width:4px;height:1px;background:#b8b8b8"></div><div class="a" style="left:698px;top:429px;width:4px;height:1px;background:#b8b8b8"></div>
<div class="a" style="left:670px;top:436px;width:4px;height:1px;background:#b8b8b8"></div><div class="a" style="left:698px;top:436px;width:4px;height:1px;background:#b8b8b8"></div>
<div class="a" style="left:670px;top:443px;width:4px;height:1px;background:#b8b8b8"></div><div class="a" style="left:698px;top:443px;width:4px;height:1px;background:#b8b8b8"></div>
<div class="a" style="left:670px;top:451px;width:4px;height:1px;background:#b8b8b8"></div><div class="a" style="left:698px;top:451px;width:4px;height:1px;background:#b8b8b8"></div>
<div class="a" style="left:670px;top:458px;width:4px;height:1px;background:#b8b8b8"></div><div class="a" style="left:698px;top:458px;width:4px;height:1px;background:#b8b8b8"></div>
<div class="a" style="left:670px;top:465px;width:4px;height:1px;background:#b8b8b8"></div><div class="a" style="left:698px;top:465px;width:4px;height:1px;background:#b8b8b8"></div>
<div class="a" style="left:670px;top:473px;width:4px;height:1px;background:#b8b8b8"></div><div class="a" style="left:698px;top:473px;width:4px;height:1px;background:#b8b8b8"></div>
<div class="a" style="left:670px;top:480px;width:4px;height:1px;background:#b8b8b8"></div><div class="a" style="left:698px;top:480px;width:4px;height:1px;background:#b8b8b8"></div>
<div class="a" style="left:670px;top:487px;width:4px;height:1px;background:#b8b8b8"></div><div class="a" style="left:698px;top:487px;width:4px;height:1px;background:#b8b8b8"></div>
<div class="a" style="left:670px;top:495px;width:4px;height:1px;background:#b8b8b8"></div><div class="a" style="left:698px;top:495px;width:4px;height:1px;background:#b8b8b8"></div>
<div class="a" style="left:670px;top:502px;width:4px;height:1px;background:#b8b8b8"></div><div class="a" style="left:698px;top:502px;width:4px;height:1px;background:#b8b8b8"></div>
<div class="a" style="left:675px;top:475px;width:21px;height:10px;background:#0078d7"></div>
<div class="a" style="left:672px;top:522.0px;font-size:12.5px;line-height:15px;color:#000;white-space:nowrap;transform-origin:0 0;transform:scaleX(0.92)">Offset</div>
<div class="a" style="left:684px;top:550px;width:4px;height:116px;background:#e6e6e6;border:1px solid #d6d6d6"></div>
<div class="a" style="left:670px;top:555px;width:4px;height:1px;background:#b8b8b8"></div><div class="a" style="left:698px;top:555px;width:4px;height:1px;background:#b8b8b8"></div>
<div class="a" style="left:670px;top:562px;width:4px;height:1px;background:#b8b8b8"></div><div class="a" style="left:698px;top:562px;width:4px;height:1px;background:#b8b8b8"></div>
<div class="a" style="left:670px;top:569px;width:4px;height:1px;background:#b8b8b8"></div><div class="a" style="left:698px;top:569px;width:4px;height:1px;background:#b8b8b8"></div>
<div class="a" style="left:670px;top:576px;width:4px;height:1px;background:#b8b8b8"></div><div class="a" style="left:698px;top:576px;width:4px;height:1px;background:#b8b8b8"></div>
<div class="a" style="left:670px;top:583px;width:4px;height:1px;background:#b8b8b8"></div><div class="a" style="left:698px;top:583px;width:4px;height:1px;background:#b8b8b8"></div>
<div class="a" style="left:670px;top:590px;width:4px;height:1px;background:#b8b8b8"></div><div class="a" style="left:698px;top:590px;width:4px;height:1px;background:#b8b8b8"></div>
<div class="a" style="left:670px;top:597px;width:4px;height:1px;background:#b8b8b8"></div><div class="a" style="left:698px;top:597px;width:4px;height:1px;background:#b8b8b8"></div>
<div class="a" style="left:670px;top:604px;width:4px;height:1px;background:#b8b8b8"></div><div class="a" style="left:698px;top:604px;width:4px;height:1px;background:#b8b8b8"></div>
<div class="a" style="left:670px;top:612px;width:4px;height:1px;background:#b8b8b8"></div><div class="a" style="left:698px;top:612px;width:4px;height:1px;background:#b8b8b8"></div>
<div class="a" style="left:670px;top:619px;width:4px;height:1px;background:#b8b8b8"></div><div class="a" style="left:698px;top:619px;width:4px;height:1px;background:#b8b8b8"></div>
<div class="a" style="left:670px;top:626px;width:4px;height:1px;background:#b8b8b8"></div><div class="a" style="left:698px;top:626px;width:4px;height:1px;background:#b8b8b8"></div>
<div class="a" style="left:670px;top:633px;width:4px;height:1px;background:#b8b8b8"></div><div class="a" style="left:698px;top:633px;width:4px;height:1px;background:#b8b8b8"></div>
<div class="a" style="left:670px;top:640px;width:4px;height:1px;background:#b8b8b8"></div><div class="a" style="left:698px;top:640px;width:4px;height:1px;background:#b8b8b8"></div>
<div class="a" style="left:670px;top:647px;width:4px;height:1px;background:#b8b8b8"></div><div class="a" style="left:698px;top:647px;width:4px;height:1px;background:#b8b8b8"></div>
<div class="a" style="left:670px;top:654px;width:4px;height:1px;background:#b8b8b8"></div><div class="a" style="left:698px;top:654px;width:4px;height:1px;background:#b8b8b8"></div>
<div class="a" style="left:670px;top:661px;width:4px;height:1px;background:#b8b8b8"></div><div class="a" style="left:698px;top:661px;width:4px;height:1px;background:#b8b8b8"></div>
<div class="a" style="left:675px;top:656px;width:21px;height:10px;background:#0078d7"></div>
<div class="a" style="left:714px;top:0;width:10px;height:687px;background:linear-gradient(90deg,rgba(0,0,0,0),rgba(0,0,0,0.08))"></div>


<!-- RIGHT: terminal window (below) -->
<div class="a" style="left:724px;top:0;width:642px;height:687px;background:#fff"></div>
<div class="a" style="left:724px;top:0;width:2px;height:289px;background:#222"></div><div class="a" style="left:724px;top:289px;width:2px;height:52px;background:#1a4a9a"></div><div class="a" style="left:724px;top:341px;width:2px;height:92px;background:#c4c4c4"></div><div class="a" style="left:723px;top:433px;width:3px;height:254px;background:#6e6e6e"></div>
<div id="term" class="a" style="left:727px;top:435px;width:639px;height:160px;font-size:11px;line-height:13px;color:#000;white-space:pre;overflow:hidden;letter-spacing:-0.1px"><div>8C 87 DA 00 08 87 3C 12 20 00 00 00 00 00 00 22 40 00 00 00 00 00 00 22 40 00 00 00 00 00 00 20 40 00 00 00 00 00 00 22 40 18 80 01 20 A4 B8 B6</div><div>C3 03 28 80 87 B5 C3 03 30 22 3A 05 22 97 02 C5 03</div><div> </div><div>1: [1KUNS-PF]<span style="display:inline-block;width:58px;height:13px;background:#000;vertical-align:-3px;margin-left:1px"></span><b style="font-size:13.5px;letter-spacing:0;line-height:0">13:56:01UTC</b></div><div style="letter-spacing:-0.2px">[priority:2 src:6 src_port:26 dest:8 dest_port:31 len:65 FEC_err:0 RS_err:11]</div><div>8C 87 DA 00 08 96 3C 12 20 00 00 00 00 00 00 22 40 00 00 00 00 00 00 22 40 00 00 00 00 00 00 20 40 00 00 00 00 00 00 22 40 18 80 01 20 A4 B8 B6</div><div>C3 03 28 80 87 B5 C3 03 30 22 3A 05 F2 02 DE 02 3A</div><div> </div><div>1: [1KUNS-PF]<span style="display:inline-block;width:58px;height:13px;background:#000;vertical-align:-3px;margin-left:1px"></span><b style="font-size:13.5px;letter-spacing:0;line-height:0">13:56:11UTC</b></div><div style="letter-spacing:-0.2px">[priority:2 src:6 src_port:26 dest:8 dest_port:31 len:66 FEC_err:0 RS_err:10]</div><div>8C 87 DA 00 08 9F 3C 12 20 00 00 00 00 00 00 22 40 00 00 00 00 00 00 22 40 00 00 00 00 00 00 20 40 00 00 00 00 00 00 22 40 18 80 01 20 AE B8</div><div>B6 C3 03 28 80 87 B5 C3 03 30 22 3A 06 8D 01 82 01 FA 03</div></div>
<!-- table -->
<div class="a" style="left:726px;top:620px;width:640px;height:3px;background:#f0f0f0;border-bottom:1px solid #6a6a6a"></div>
<div id="tbl" class="a" style="left:726px;top:623px;width:640px;height:39px">
 <div class="a" style="left:0;top:0;width:640px;height:19px;background:#f0f0f0;border-bottom:2px solid #111"></div>
 <div class="a" style="left:0;top:20px;width:64px;height:18px;background:#0074d4"></div>
 <div class="a" style="left:0;top:38px;width:640px;height:1px;background:#c8c8c8"></div>
 <div id="thd" style="position:absolute;left:0;top:0;font-size:12px;line-height:19px;white-space:nowrap"></div>
</div>

<!-- GETKISS window -->
<div id="gk" class="a" style="left:726px;top:0;width:640px;height:443px;background:#f0f0f0;box-shadow:0 2px 6px rgba(0,0,0,0.35)">
 <div class="a" style="left:0;top:0;width:640px;height:16px;background:#fff"></div>
 <div class="a" style="left:7px;top:1px;font-size:12px;line-height:15px;color:#404040;white-space:nowrap">File<span style="margin-left:14px">Options</span><span style="margin-left:14px">Info</span></div>
 <!-- TCP client -->
 <div class="a" style="left:8px;top:28px;width:12px;height:12px;background:#fff;border-top:1px solid #a0a0a0;border-left:1px solid #a0a0a0;border-right:1px solid #fff;border-bottom:1px solid #fff;box-shadow:inset 1px 1px 0 #696969"></div>
 <div class="a" style="left:26px;top:27.5px;font-size:12px;line-height:15px;color:#000;transform-origin:0 0;transform:scaleX(0.89)">TCP client</div>
 <div class="a" style="left:88px;top:30px;width:17px;height:9px;background:#00e000;border:1px solid #404040"></div>
 <div class="a" style="left:112px;top:27px;font-size:12px;line-height:15px;color:#8a8a8a;white-space:nowrap;transform-origin:0 0;transform:scaleX(0.895)">localhost:8100 -&gt; Connected</div>
 <!-- NUSHSAT box -->
 <div class="a" style="left:424px;top:18px;width:240px;height:27px;border-top:2px solid #8a8a8a;border-left:2px solid #8a8a8a;border-bottom:1px solid #fff;background:#f0f0f0"></div>
 <div class="a mono" style="left:429px;top:22px;font-size:17.5px;line-height:22px;color:#003c3c;letter-spacing:0.2px;-webkit-text-stroke:0.6px #003c3c">NUSHSAT-1</div>
 <!-- tabs -->
 <svg class="a" style="left:0;top:40px" width="640" height="375">
  <path d="M8.5,369 V18 L12,10.5 H253 L256,15 V30.5" fill="none" stroke="#6a6a6a" stroke-width="1"/>
  <path d="M9.5,368 V18.5 L12.5,11.5" fill="none" stroke="#ffffff" stroke-width="1"/>
  <path d="M254,30.5 H640" fill="none" stroke="#6a6a6a" stroke-width="1.5"/>
  <path d="M256,15 L260,10.5 H501 L504,15 L508,10.5 H640" fill="none" stroke="#6a6a6a" stroke-width="1.5"/>
  <path d="M255.5,14 V30.5 M503.5,14 V30.5" fill="none" stroke="#6a6a6a" stroke-width="2"/>
  <path d="M8.5,369 H640" fill="none" stroke="#6a6a6a" stroke-width="2"/>
 </svg>
 <div class="a" style="left:109px;top:54px;font-size:12.5px;font-weight:bold;line-height:15px;color:#000;transform-origin:0 0;transform:scaleX(0.94)">GetKISS</div>
 <div class="a" style="left:346px;top:54px;font-size:12px;line-height:15px;color:#000;transform-origin:0 0;transform:scaleX(0.88)">TLM Forwarder</div>
 <div class="a" style="left:613px;top:54px;font-size:12px;line-height:15px;color:#000;transform-origin:0 0;transform:scaleX(0.95)">Debug</div>
 <!-- text box -->
 <div class="a" style="left:16px;top:82px;width:393px;height:321px;border:1px solid #666;border-right-color:#555;border-bottom-color:#555;background:#fff;box-shadow:inset 1px 1px 0 #9a9a9a,inset 2px 2px 0 #666,inset -1px -1px 0 #fff">
  <div class="a" style="left:373px;top:2px;width:16px;height:315px;background:#f0f0f0"></div>
  <div class="a" style="left:374px;top:82px;width:14px;height:217px;background:#cdcdcd"></div>
  <svg class="a" style="left:374px;top:7px" width="14" height="10"><path d="M3,7.5 L7,3.5 L11,7.5" fill="none" stroke="#555" stroke-width="2"/></svg>
  <svg class="a" style="left:374px;top:304px" width="14" height="10"><path d="M3,2.5 L7,6.5 L11,2.5" fill="none" stroke="#555" stroke-width="2"/></svg>
 </div>
 <div id="kiss" class="a mono" style="left:20px;top:100px;width:370px;font-size:11px;line-height:13px;color:#000;white-space:pre;letter-spacing:-0.6px"><div style="color:#1a9aa8">À.Œ‡Ú..–&lt;. ......"@......"@...... @......"@.€. š¸¶Ã.</div><div style="color:#1a9aa8">(€‡µÃ.0":."–.Å.À</div><div>2025-03-15 <span style="display:inline-block;width:74px;height:11px;background:#000;vertical-align:-2px"></span><b style="font-family:'Liberation Sans';font-size:13.5px;letter-spacing:0;line-height:0">13:56:01UTC</b></div><div>Packet number 2</div><div>0000: C0 00 8C 87 DA 00 08 96 3C 12 20 00 00 00 00 00</div><div>0010: 00 22 40 00 00 00 00 00 00 22 40 00 00 00 00 00</div><div>0020: 00 20 40 00 00 00 00 00 00 22 40 18 80 01 20 A4</div><div>0030: B8 B6 C3 03 28 80 87 B5 C3 03 30 22 3A 05 F2 02</div><div>0040: DE 02 3A C0</div><div> </div><div style="color:#1a9aa8">À.Œ‡Ú..–&lt;. ......"@......"@...... @......"@.€. ¤¸¶Ã.</div><div style="color:#1a9aa8">(€‡µÃ.0":.ò.Þ.:À</div><div>2025-03-15 <span style="display:inline-block;width:74px;height:11px;background:#000;vertical-align:-2px"></span><b style="font-family:'Liberation Sans';font-size:13.5px;letter-spacing:0;line-height:0">13:56:11UTC</b></div><div>Packet number 3</div><div>0000: C0 00 8C 87 DA 00 08 9F 3C 12 20 00 00 00 00 00</div><div>0010: 00 22 40 00 00 00 00 00 00 22 40 00 00 00 00 00</div><div>0020: 00 20 40 00 00 00 00 00 00 22 40 18 80 01 20 AE</div><div>0030: B8 B6 C3 03 28 80 87 B5 C3 03 30 22 3A 06 8D 01</div><div>0040: 82 01 FA 03 C0</div><div> </div><div style="color:#1a9aa8">À.Œ‡Ú..Ÿ&lt;. ......"@......"@...... @......"@.€. ®¸¶Ã.</div><div style="color:#1a9aa8">(€‡µÃ.0":. .,.ú.À</div></div>
 <!-- right info -->
 <div class="a" style="left:416px;top:82px;font-size:13px;line-height:16px;color:#0000ff;white-space:nowrap">sábado, 2025 março 15&nbsp; 16:37:21 UTC</div>
 <div class="a" style="left:416px;top:113px;width:230px;height:41px;border:1px solid #b8b8b8;border-right:none;box-shadow:inset 1px 1px 0 #fff"></div>
 <div class="a" style="left:422px;top:104px;padding:0 3px;background:#f0f0f0;font-size:12.5px;font-weight:bold;line-height:16px;color:#808080;white-space:nowrap;letter-spacing:0px">Satellite at QTH of PU4ELT_PORTABLE</div>
 <div class="a" style="left:423px;top:129px;font-size:12px;line-height:16px;color:#000;white-space:nowrap;transform-origin:0 0;transform:scaleX(0.9)">Az: 145,3° | El: -46,0° | Sun: 0% | 79,06°E | 47,</div>
 <div class="a" style="left:631px;top:161px;font-size:12px;line-height:16px;color:#a0a0a0">T</div>
 <div class="a" style="left:416px;top:188px;width:12px;height:12px;background:#fff;border-top:1px solid #a0a0a0;border-left:1px solid #a0a0a0;border-right:1px solid #fff;border-bottom:1px solid #fff;box-shadow:inset 1px 1px 0 #696969"></div>
 <div class="a" style="left:416px;top:203px;width:12px;height:12px;background:#fff;border-top:1px solid #a0a0a0;border-left:1px solid #a0a0a0;border-right:1px solid #fff;border-bottom:1px solid #fff;box-shadow:inset 1px 1px 0 #696969"></div>
 <svg class="a" style="left:417px;top:204px" width="10" height="10"><path d="M1.5,5 L4,7.5 L8.5,2" fill="none" stroke="#000" stroke-width="1.8"/></svg>
 <div class="a" style="left:416px;top:218px;width:12px;height:12px;background:#fff;border-top:1px solid #a0a0a0;border-left:1px solid #a0a0a0;border-right:1px solid #fff;border-bottom:1px solid #fff;box-shadow:inset 1px 1px 0 #696969"></div>
 <div class="a" style="left:434px;top:187px;font-size:11.5px;line-height:15px;color:#000;white-space:nowrap;transform-origin:0 0;transform:scaleX(0.9)">filter if the satellite is not visible</div>
 <div class="a" style="left:434px;top:202px;font-size:11.5px;line-height:15px;color:#000;white-space:nowrap;transform-origin:0 0;transform:scaleX(0.9)">start soundmodem automatically</div>
 <div class="a" style="left:434px;top:218px;font-size:11.5px;line-height:15px;color:#000;white-space:nowrap;transform-origin:0 0;transform:scaleX(0.9)">suppress output</div>
 <div class="a" style="left:9px;top:418px;font-size:12px;line-height:15px;color:#b4b4b4;white-space:nowrap;transform-origin:0 0;transform:scaleX(0.905)">C:\TLM SATELITES\Dados Brutos GETKISS+\NUSHSAT-1\2025-03-15_pu4elt_portable_nushsat-1.kss</div>
</div>
<script>
var h=["MyCall","DestCall","Status","Sent pkts","Sent bytes","Rcvd pkts","Rcvd bytes","Rcvd FC","CPS TX","CPS RX"];
var s="";for(var i=0;i<h.length;i++){s+='<div style="position:absolute;left:'+(i*65)+'px;top:0;width:65px;height:19px;border-right:'+(i==0?'2px solid #111':'1px solid #111')+';padding-left:2px"><span style="display:inline-block;transform-origin:0 0;transform:translateY(1px) scaleX(0.9)">'+h[i]+'</span></div>';
s+='<div style="position:absolute;left:'+(i*65)+'px;top:20px;width:65px;height:18px;border-right:1px solid #c8c8c8"></div>';}
document.getElementById('thd').innerHTML=s;
</script>

</body></html>
